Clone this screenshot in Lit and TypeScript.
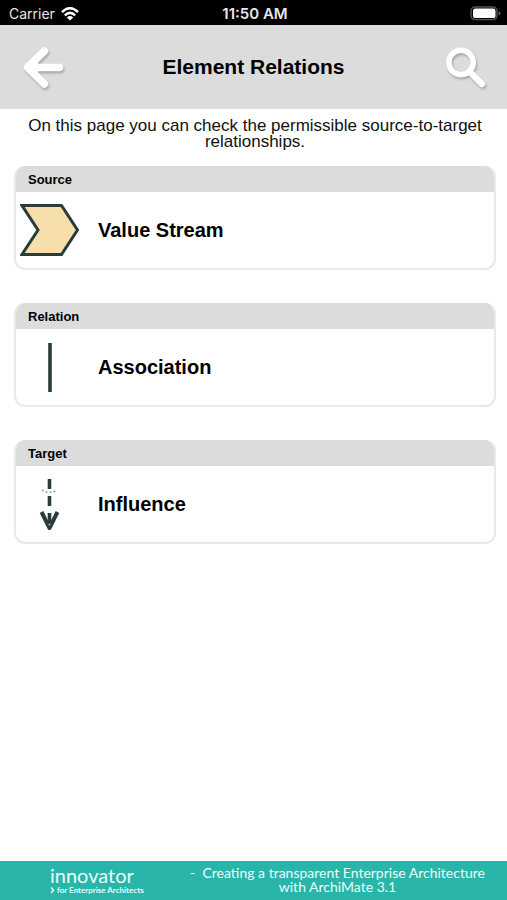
import { LitElement, html, css, svg } from "lit";
import { customElement, property } from "lit/decorators.js";

const INK = "#2b3b3c";

const icons: Record<string, unknown> = {
  "value-stream": svg`<path d="M2 5.5H41.5L57.5 30L41.5 54.5H2L18 30Z" fill="#f7dfac" stroke=${INK} stroke-width="3"/>`,
  association: svg`<path d="M30 6V55" stroke=${INK} stroke-width="3.6" fill="none"/>`,
  influence: svg`
    <g fill="none" stroke=${INK}>
      <path d="M29.5 5V15M29.5 22V32M29.5 39V50" stroke-width="3.6"/>
      <path d="M21.5 38L29.5 54L37.5 38" stroke-width="4" stroke-linejoin="round"/>
      <path d="M22 16L26 18H33L37 16" stroke-width="1.4" stroke-dasharray="2 2" opacity=".5"/>
    </g>
    <circle cx="29.5" cy="50.5" r="1" fill="#b8c0c0"/>`,
};

@customElement("status-bar")
export class StatusBar extends LitElement {
  static styles = css`
    :host {
      display: grid;
      grid-template-columns: 1fr auto 1fr;
      align-items: center;
      height: 25px;
      padding: 2px 6px 0 9px;
      box-sizing: border-box;
      background: #000;
      color: #e6e6e6;
      font: 14px/20px Inter, sans-serif;
    }
    .carrier { display: flex; align-items: center; gap: 6px; }
    .time { font-size: 15px; font-weight: 600; }
    .battery { justify-self: end; }
    svg { display: block; }
  `;
  render() {
    return html`
      <div class="carrier">
        <span>Carrier</span>
        <svg width="18" height="14" viewBox="0 0 18 14" fill="none" stroke="#fff" stroke-width="2.5">
          <path d="M1 5.2Q9-2.6 17 5.2"/>
          <path d="M3.8 8.3Q9 3.4 14.2 8.3"/>
          <path d="M9 13.6L5.8 10.4Q9 7.8 12.2 10.4Z" fill="#fff" stroke="none"/>
        </svg>
      </div>
      <span class="time">11:50 AM</span>
      <svg class="battery" width="31" height="15" viewBox="0 0 31 15">
        <rect x="1" y="1" width="26" height="12.6" rx="4" fill="none" stroke="#555" stroke-width="1.4"/>
        <rect x="3" y="2.5" width="22.5" height="9.6" rx="2.2" fill="#fff"/>
        <path d="M28.6 5V9.6Q30.4 8.8 30.4 7.3T28.6 5Z" fill="#666"/>
      </svg>
    `;
  }
}

@customElement("relation-card")
export class RelationCard extends LitElement {
  @property() heading = "";
  @property() label = "";
  @property() icon = "";

  static styles = css`
    :host { display: block; }
    .card {
      border: 2px solid #e9e9e9;
      border-top: 0;
      border-radius: 11px;
      overflow: hidden;
      background: #fff;
    }
    .heading {
      margin: 0;
      padding: 1px 12px 0;
      background: #dcdcdc;
      font-size: 13px;
      line-height: 25px;
      font-weight: 700;
    }
    .item {
      display: flex;
      align-items: center;
      gap: 18px;
      width: 100%;
      height: 76px;
      padding: 0 4px;
      border: 0;
      background: none;
      color: inherit;
      font: inherit;
      font-size: 20px;
      font-weight: 700;
      text-align: left;
      cursor: pointer;
    }
    svg { flex: none; }
  `;
  render() {
    return html`
      <section class="card">
        <h2 class="heading">${this.heading}</h2>
        <button class="item" type="button">
          <svg width="60" height="60" viewBox="0 0 60 60" aria-hidden="true">${icons[this.icon]}</svg>
          <span>${this.label}</span>
        </button>
      </section>
    `;
  }
}

@customElement("app-root")
export class AppRoot extends LitElement {
  static styles = css`
    :host {
      display: flex;
      flex-direction: column;
      min-height: 100vh;
      background: #fff;
      color: #000;
      font-family: "Liberation Sans", Arial, sans-serif;
    }
    .header {
      display: grid;
      grid-template-columns: 1fr auto 1fr;
      align-items: center;
      height: 84px;
      padding: 0 18px;
      background: #dcdcdc;
    }
    .title { margin: 0; font-size: 21px; line-height: 24px; font-weight: 700; }
    .tool { padding: 0; border: 0; background: none; cursor: pointer; }
    .tool svg { display: block; filter: drop-shadow(1px 2px 1px rgb(0 0 0 / 0.25)); }
    .search { justify-self: end; }
    .back { justify-self: start; }
    .main { flex: 1; padding: 9px 11px 24px 14px; }
    .intro { margin: 0 0 16px; font-size: 17px; line-height: 16px; text-align: center; color: #111; }
    .cards { display: grid; gap: 33px; }
    .banner {
      display: grid;
      grid-template-columns: 148px 1fr;
      gap: 20px;
      padding: 5px 0 4px;
      background: #2ab5aa;
      color: #e6fffb;
      text-decoration: none;
    }
    .brand { display: flex; flex-direction: column; padding-left: 50px; white-space: nowrap; }
    .name { font: 20px/18px Lato, sans-serif; }
    .tagline { display: flex; align-items: center; gap: 2px; font: 700 8px/12px Lato, sans-serif; }
    .slogan { font: 14px/14px Lato, sans-serif; text-align: center; }
  `;
  render() {
    return html`
      <status-bar></status-bar>
      <header class="header">
        <button class="tool back" type="button" aria-label="Back">
          <svg width="50" height="50" viewBox="0 0 50 50" fill="none" stroke="#fff" stroke-width="7.5" stroke-linecap="round" stroke-linejoin="round">
            <path d="M26.5 9L9.5 25.5L26.5 42M10 25.5H41.5"/>
            <path d="M9.5 25.5L20 16V35Z" fill="#fff" stroke="none"/>
          </svg>
        </button>
        <h1 class="title">Element Relations</h1>
        <button class="tool search" type="button" aria-label="Search">
          <svg width="46" height="50" viewBox="0 0 46 50" fill="none" stroke="#fff" stroke-linecap="round">
            <circle cx="18" cy="20.5" r="12.2" stroke-width="5.6"/>
            <path d="M27 30L39 42" stroke-width="6.4"/>
          </svg>
        </button>
      </header>
      <main class="main">
        <p class="intro">On this page you can check the permissible source-to-target relationships.</p>
        <div class="cards">
          <relation-card heading="Source" label="Value Stream" icon="value-stream"></relation-card>
          <relation-card heading="Relation" label="Association" icon="association"></relation-card>
          <relation-card heading="Target" label="Influence" icon="influence"></relation-card>
        </div>
      </main>
      <a class="banner" href="#innovator">
        <span class="brand">
          <span class="name">innovator</span>
          <span class="tagline">
            <svg width="5" height="8" viewBox="0 0 5 8" fill="none" stroke="currentColor" stroke-width="1.5" aria-hidden="true"><path d="M1 1.5L3.5 4.2L1 7"/></svg>
            <span>for Enterprise Architects</span>
          </span>
        </span>
        <span class="slogan">-&nbsp; Creating a transparent Enterprise Architecture<br>with ArchiMate 3.1</span>
      </a>
    `;
  }
}
